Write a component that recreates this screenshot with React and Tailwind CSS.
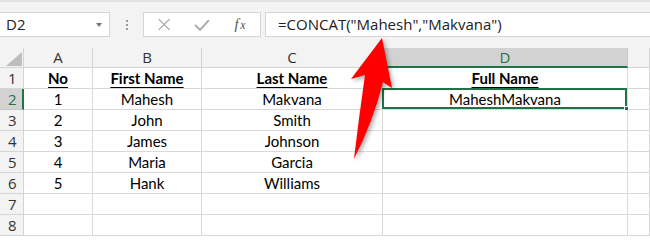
import React from "react";

const cols = ["A", "B", "C", "D", ""];
const data = [
  ["No", "First Name", "Last Name", "Full Name", ""],
  ["1", "Mahesh", "Makvana", "MaheshMakvana", ""],
  ["2", "John", "Smith", "", ""],
  ["3", "James", "Johnson", "", ""],
  ["4", "Maria", "Garcia", "", ""],
  ["5", "Hank", "Williams", "", ""],
  ["", "", "", "", ""],
  ["", "", "", "", ""],
];

const uiFont = { fontFamily: '"Open Sans", "Noto Sans", sans-serif' };
const cellFont = { fontFamily: 'Lato, "Open Sans", sans-serif' };

export default function App() {
  return (
    <div className="relative w-[650px] h-[236px] overflow-hidden bg-[#f3f3f3] border-t-[2px] border-[#e1e1e1]" style={uiFont}>
      {/* formula bar */}
      <div className="flex h-[25px] mt-[10px] items-stretch">
        <div className="w-[110px] bg-white border border-l-0 border-[#d5d5d5] flex items-center justify-between pl-[6px] pr-[7px]">
          <span className="text-[15px] text-[#222] leading-none">D2</span>
          <span className="w-0 h-0 border-l-[3px] border-r-[3px] border-t-[4px] border-l-transparent border-r-transparent border-t-[#777]" />
        </div>
        <div className="w-[33px] flex flex-col items-center justify-center gap-[2px]">
          <span className="w-[2px] h-[2px] bg-[#9a9a9a]" />
          <span className="w-[2px] h-[2px] bg-[#9a9a9a]" />
          <span className="w-[2px] h-[2px] bg-[#9a9a9a]" />
        </div>
        <div className="w-[118px] bg-white border border-[#d5d5d5] flex items-center">
          <svg width="118" height="23" viewBox="0 0 118 23">
            <path d="M15 6 L26 17 M26 6 L15 17" stroke="#a6a6a6" strokeWidth="1.3" fill="none" />
            <path d="M52 12 L57 17 L66 7" stroke="#a6a6a6" strokeWidth="1.8" fill="none" />
            <text x="92" y="16" fontFamily='"Liberation Serif", serif' fontStyle="italic" fontSize="15" fill="#555">f</text>
            <text x="98" y="16" fontFamily='"Liberation Serif", serif' fontStyle="italic" fontSize="12" fill="#555">x</text>
          </svg>
        </div>
        <div className="flex-1 ml-[4px] bg-white border border-r-0 border-[#d5d5d5] flex items-center pl-[12px]">
          <span className="text-[15px] text-[#222] leading-none">=CONCAT("Mahesh","Makvana")</span>
        </div>
      </div>

      {/* grid */}
      <div className="mt-[11px] grid grid-cols-[24px_69px_109px_181px_245px_1fr] grid-rows-[20px_repeat(8,21px)]">
        {/* header row */}
        <div className="bg-[#f3f3f3] border-r border-b border-[#d4d4d4] relative">
          <svg className="absolute left-[6px] top-[4px]" width="16" height="14" viewBox="0 0 16 14">
            <polygon points="16,0 16,14 0,14" fill="#bdbdbd" />
          </svg>
        </div>
        {cols.map((c, i) =>
          c === "D" ? (
            <div key={i} className="bg-[#d2d2d2] border-r border-[#c6c6c6] border-b-[2px] border-b-[#217346] flex items-center justify-center text-[15px] text-[#217346] leading-none">
              {c}
            </div>
          ) : (
            <div key={i} className="bg-[#f3f3f3] border-r border-b border-[#d4d4d4] flex items-center justify-center text-[15px] text-[#333] leading-none">
              {c}
            </div>
          )
        )}
        {data.map((row, r) => (
          <React.Fragment key={r}>
            {r === 1 ? (
              <div className="bg-[#d2d2d2] border-r-[2px] border-r-[#217346] border-b border-b-[#c6c6c6] flex items-center pl-[8px] text-[15px] text-[#217346] leading-none">
                {r + 1}
              </div>
            ) : (
              <div className="bg-[#f3f3f3] border-r border-b border-[#d4d4d4] flex items-center pl-[8px] text-[15px] text-[#333] leading-none">
                {r + 1}
              </div>
            )}
            {row.map((v, c) => {
              const selected = r === 1 && c === 3;
              return (
                <div
                  key={c}
                  className={`relative bg-white border-r border-b border-[#d9d9d9] flex items-center justify-center text-[15px] text-black leading-none ${r === 0 ? "font-bold underline underline-offset-[3px] decoration-[1px]" : ""}`}
                  style={cellFont}
                >
                  {v}
                  {selected && (
                    <>
                      <div className="absolute -left-[1px] -top-[1px] -right-[0px] -bottom-[0px] border-2 border-[#217346]" />
                      <div className="absolute -right-[3px] -bottom-[3px] w-[6px] h-[6px] bg-[#217346] border border-white" />
                    </>
                  )}
                </div>
              );
            })}
          </React.Fragment>
        ))}
      </div>

      {/* red arrow */}
      <svg className="absolute left-0 top-0 pointer-events-none drop-shadow-[2px_2px_2px_rgba(0,0,0,0.35)]" width="650" height="236" viewBox="0 0 650 236">
        <path d="M382 36 L392 86 L383 80 Q373 120 354 157 Q359 115 365 73 L351 77 Z" fill="#ff0000" />
      </svg>
    </div>
  );
}
